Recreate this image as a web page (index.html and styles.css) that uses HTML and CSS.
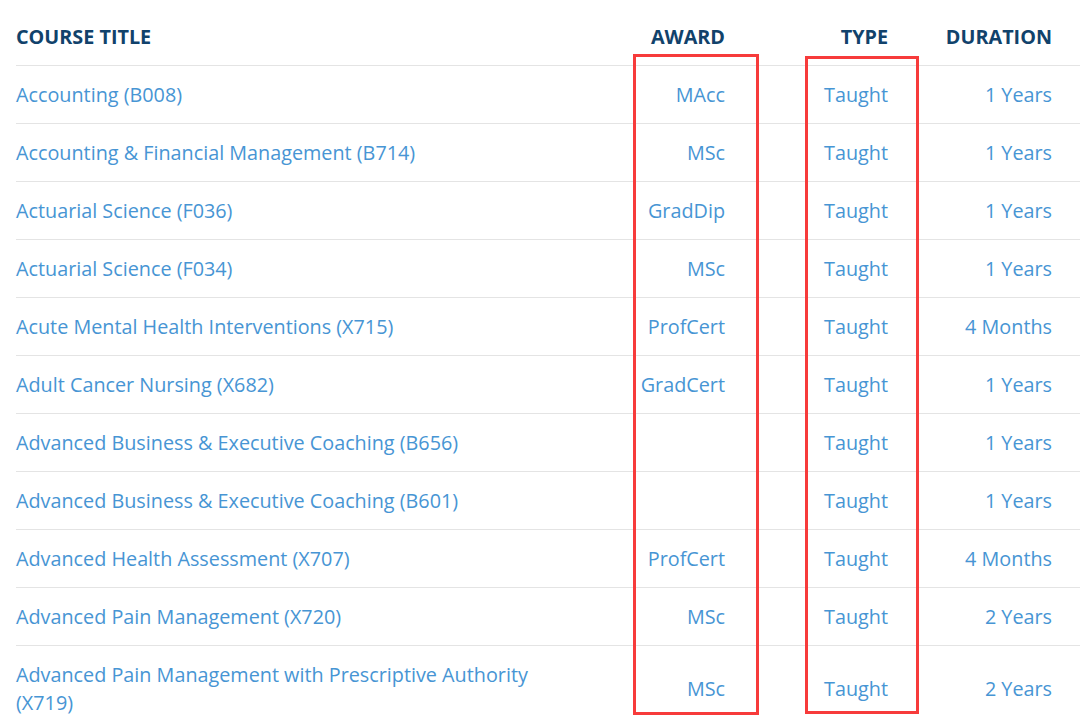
FILE: index.html
```html
<!DOCTYPE html>
<html lang="en">
<head>
<meta charset="utf-8">
<title>Courses</title>
<link rel="stylesheet" href="styles.css">
</head>
<body>
<div class="wrap">
  <table class="courses">
    <colgroup>
      <col class="c-title"><col class="c-award"><col class="c-type"><col class="c-dur">
    </colgroup>
    <thead>
      <tr><th class="left">Course Title</th><th>Award</th><th>Type</th><th>Duration</th></tr>
    </thead>
    <tbody>
      <tr><td class="left"><a href="#">Accounting (B008)</a></td><td>MAcc</td><td>Taught</td><td>1 Years</td></tr>
      <tr><td class="left"><a href="#">Accounting &amp; Financial Management (B714)</a></td><td>MSc</td><td>Taught</td><td>1 Years</td></tr>
      <tr><td class="left"><a href="#">Actuarial Science (F036)</a></td><td>GradDip</td><td>Taught</td><td>1 Years</td></tr>
      <tr><td class="left"><a href="#">Actuarial Science (F034)</a></td><td>MSc</td><td>Taught</td><td>1 Years</td></tr>
      <tr><td class="left"><a href="#">Acute Mental Health Interventions (X715)</a></td><td>ProfCert</td><td>Taught</td><td>4 Months</td></tr>
      <tr><td class="left"><a href="#">Adult Cancer Nursing (X682)</a></td><td>GradCert</td><td>Taught</td><td>1 Years</td></tr>
      <tr><td class="left"><a href="#">Advanced Business &amp; Executive Coaching (B656)</a></td><td></td><td>Taught</td><td>1 Years</td></tr>
      <tr><td class="left"><a href="#">Advanced Business &amp; Executive Coaching (B601)</a></td><td></td><td>Taught</td><td>1 Years</td></tr>
      <tr><td class="left"><a href="#">Advanced Health Assessment (X707)</a></td><td>ProfCert</td><td>Taught</td><td>4 Months</td></tr>
      <tr><td class="left"><a href="#">Advanced Pain Management (X720)</a></td><td>MSc</td><td>Taught</td><td>2 Years</td></tr>
      <tr><td class="left"><a href="#">Advanced Pain Management with Prescriptive Authority (X719)</a></td><td>MSc</td><td>Taught</td><td>2 Years</td></tr>
    </tbody>
  </table>
  <div class="mark mark-award"></div>
  <div class="mark mark-type"></div>
</div>
</body>
</html>
```

FILE: styles.css
```css
html, body {
  margin: 0;
  padding: 0;
  background: #ffffff;
}

body {
  font-family: "Open Sans", "Noto Sans", sans-serif;
  font-size: 19.8px;
  overflow: hidden;
}

.wrap {
  position: relative;
  padding-left: 16px;
}

.courses {
  width: 1064px;
  border-collapse: collapse;
  table-layout: fixed;
}

.c-title { width: 574px; }
.c-award { width: 163px; }
.c-type { width: 163px; }
.c-dur { width: 164px; }

.courses th,
.courses td {
  text-align: right;
  padding: 15px 28px 14px 0;
  line-height: 28px;
  vertical-align: middle;
}

.courses th {
  padding-top: 23px;
  font-weight: 700;
  text-transform: uppercase;
  color: #11426b;
}

.courses td {
  border-top: 1px solid #e4e4e4;
  color: #4795d4;
}

.courses .left {
  text-align: left;
}

.courses a {
  color: #4795d4;
  text-decoration: none;
}

.mark {
  position: absolute;
  border: 3px solid #f73b3b;
  box-sizing: border-box;
}

.mark-award {
  left: 633px;
  top: 54px;
  width: 126px;
  height: 661px;
}

.mark-type {
  left: 805px;
  top: 56px;
  width: 114px;
  height: 658px;
}
```
